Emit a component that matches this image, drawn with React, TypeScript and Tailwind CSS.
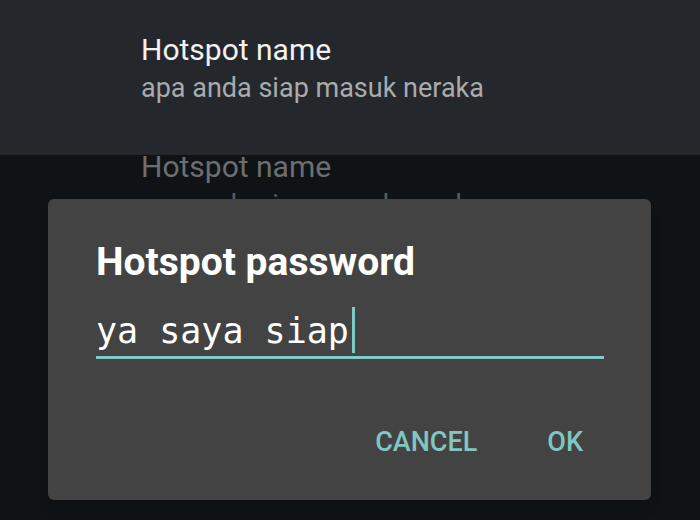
export default function App() {
  return (
    <div className="relative w-[700px] h-[520px] overflow-hidden bg-[#101315] font-['Roboto',sans-serif]">
      <div className="h-[155px] bg-[#24272b] pl-[141px] pt-[32px]">
        <div className="text-[30px] leading-[36px] text-[#f2f2f2]">Hotspot name</div>
        <div className="mt-[3px] text-[27px] leading-[34px] text-[#a9abad]">apa anda siap masuk neraka</div>
      </div>

      <div className="pl-[141px]">
        <div className="text-[30px] leading-[24px] text-[#6c6e70]">Hotspot name</div>
        <div className="mt-[9px] text-[27px] leading-[34px] text-[#5a5c5e]">apa anda siap masuk neraka</div>
      </div>

      <div className="absolute left-[48px] top-[199px] w-[603px] h-[301px] rounded-[6px] bg-[#434343] shadow-lg">
        <div className="pl-[48px] pr-[47px] pt-[41px]">
          <div className="text-[39px] leading-[44px] font-bold text-white">Hotspot password</div>
          <div className="mt-[23px] flex items-end pb-[3px] border-b-[3px] border-[#80cbc4]">
            <span className="font-['DejaVu_Sans_Mono',monospace] text-[35px] leading-[44px] text-white whitespace-pre">ya saya siap</span>
            <div className="ml-[3px] w-[3px] h-[46px] bg-[#80cbc4]" />
          </div>
        </div>
        <div className="mt-[67px] flex justify-end gap-[70px] pr-[68px]">
          <button className="text-[27px] leading-[32px] font-medium text-[#80c7c0]">CANCEL</button>
          <button className="text-[27px] leading-[32px] font-medium text-[#80c7c0]">OK</button>
        </div>
      </div>
    </div>
  );
}
